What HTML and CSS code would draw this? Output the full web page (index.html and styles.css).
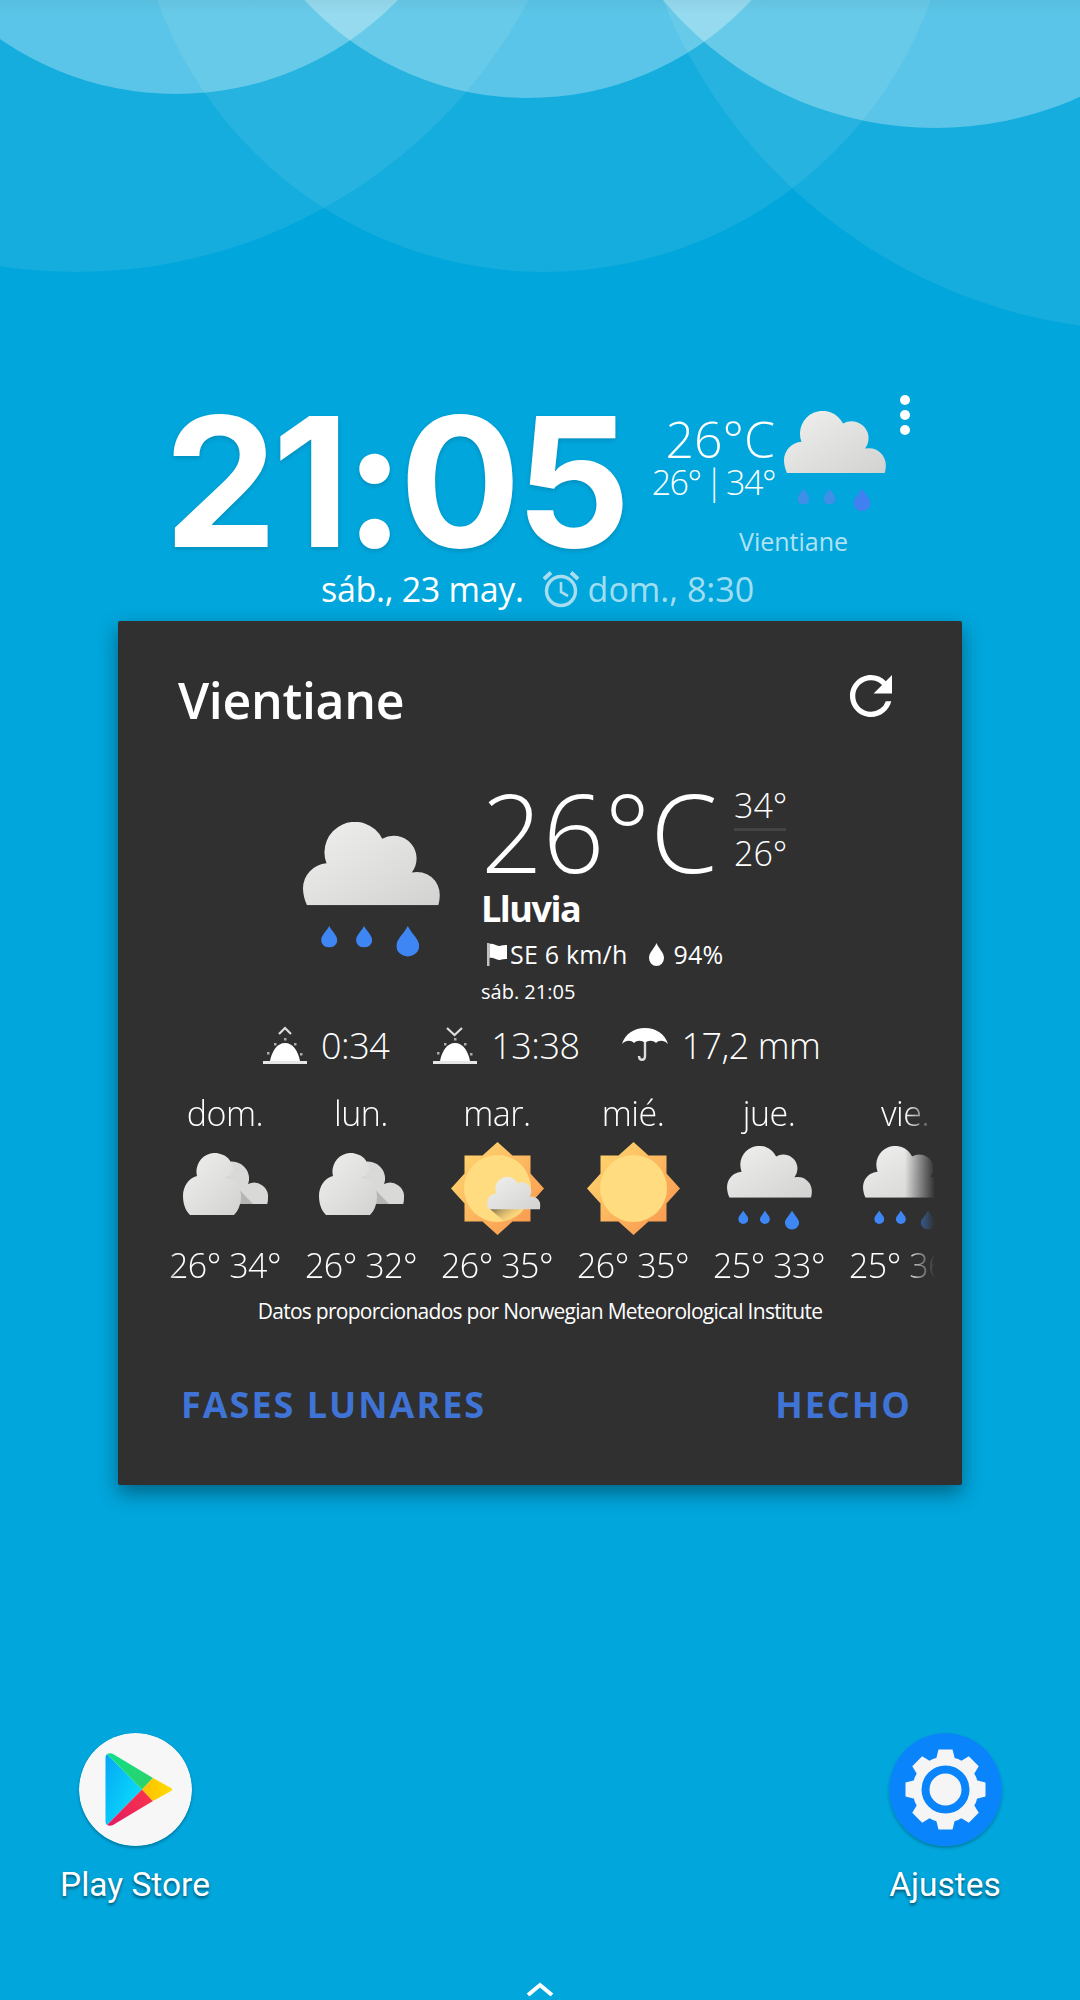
FILE: index.html
```html
<!DOCTYPE html>
<html>
<head>
    <meta charset="UTF-8">
    <meta name="viewport" content="width=device-width, initial-scale=1.0">
    <title>Vientiane</title>
    <link rel="stylesheet" href="styles.css">
</head>
<body>
    <svg class="defs" width="0" height="0">
        <defs>
            <linearGradient id="cloudFill" x1="0" y1="0" x2="1" y2="1">
                <stop offset="0" stop-color="#f0f0ef"/>
                <stop offset="1" stop-color="#d2d2d1"/>
            </linearGradient>
            <linearGradient id="sunFill" x1="0" y1="0" x2="1" y2="1">
                <stop offset="0" stop-color="#ffdd72"/>
                <stop offset="1" stop-color="#f9914c"/>
            </linearGradient>
            <linearGradient id="sunShadow" x1="0" y1="0" x2="1" y2="0.6">
                <stop offset="0" stop-color="#70654a"/>
                <stop offset="1" stop-color="#ffcf70" stop-opacity="0"/>
            </linearGradient>
            <linearGradient id="playBlue" x1="0" y1="0" x2="1" y2="0.8">
                <stop offset="0" stop-color="#05a6f6"/>
                <stop offset="1" stop-color="#0be3fb"/>
            </linearGradient>
            <linearGradient id="playGreen" x1="0" y1="0" x2="1" y2="0.6">
                <stop offset="0" stop-color="#0ddf8a"/>
                <stop offset="1" stop-color="#2bd36c"/>
            </linearGradient>
            <linearGradient id="playRed" x1="1" y1="0" x2="0" y2="1">
                <stop offset="0" stop-color="#fb3648"/>
                <stop offset="1" stop-color="#e21a66"/>
            </linearGradient>
            <linearGradient id="playYellow" x1="0" y1="0" x2="1" y2="0">
                <stop offset="0" stop-color="#ffbe00"/>
                <stop offset="1" stop-color="#ffdc00"/>
            </linearGradient>
            <symbol id="cloud" viewBox="0 0 102 62">
                <path fill="url(#cloudFill)" d="M3 62C1 58 0 53 0 49.3A18.7 18.7 0 0 1 17.500 30.800A22.700 22.700 0 0 1 59 12.500A17 17 0 0 1 81 37.600A17 17 0 0 1 101.800 54.700C101.800 57 101.400 60 100.700 62Z"/>
            </symbol>
            <symbol id="drop" viewBox="0 0 12 16">
                <path d="M6 0C8 4 12 7 12 10.500A6 5.500 0 0 1 0 10.500C0 7 4 4 6 0Z"/>
            </symbol>
            <symbol id="rain" viewBox="0 0 102 102">
                <use href="#cloud" width="102" height="62"/>
                <use href="#drop" class="drop-small" x="13.500" y="77.500" width="12" height="16"/>
                <use href="#drop" class="drop-small" x="39.500" y="77.500" width="12" height="16"/>
                <use href="#drop" class="drop-big" x="69.500" y="76" width="17" height="25.500"/>
            </symbol>
            <symbol id="cloudy" viewBox="0 0 85 62">
                <path fill="#d9d9d8" d="M33 51V20A17 17 0 0 1 66 27A14 14 0 0 1 65 31A14 14 0 0 1 85 45C85 47 84.800 49 84.300 51Z"/>
                <path fill="#b5b5b4" d="M42 22L70 51H50L42 30Z"/>
                <path fill="url(#cloudFill)" d="M7 62C2 57 0 50 0 43C0 33 6 25 14 23A18.500 18.500 0 0 1 50 14C50.500 19 47 23 43 24C52 28 58 35 58 43C58 50 56 57 51 62Z"/>
            </symbol>
            <symbol id="sun" viewBox="0 0 93 93">
                <path fill="url(#sunFill)" d="M46.500 0L61.500 13.500H79.500V31.500L93 46.500L79.500 61.500V79.500H61.500L46.500 93L31.500 79.500H13.500V61.500L0 46.500L13.500 31.500V13.500H31.500Z"/>
                <circle cx="46.500" cy="46.500" r="33.500" fill="#ffdc80"/>
            </symbol>
        </defs>
    </svg>

    <div class="screen">
        <svg class="wallpaper" width="1080" height="340" viewBox="0 0 1080 340">
            <circle cx="76" cy="-241" r="513"/>
            <circle cx="544" cy="-139" r="411"/>
            <circle cx="1154" cy="-199" r="530"/>
            <circle class="light" cx="176" cy="-215" r="309"/>
            <circle class="light" cx="528" cy="-206" r="304"/>
            <circle class="light" cx="935" cy="-225" r="353"/>
        </svg>

        <div class="home-widget">
            <div class="clock-row">
                <div class="time">21:05</div>
                <div class="mini-weather">
                    <div class="mini-top">
                        <div class="mini-temps">
                            <div class="mini-now">26°C</div>
                            <div class="mini-range">26° | 34°</div>
                        </div>
                        <svg class="mini-icon"><use href="#rain"/></svg>
                    </div>
                    <div class="mini-city">Vientiane</div>
                </div>
                <div class="more-dots"><i></i><i></i><i></i></div>
            </div>
            <div class="date-row">
                <span class="date">sáb., 23 may.</span>
                <svg class="alarm" viewBox="0 0 38 38" fill="none" stroke="#a8dcef" stroke-width="3.400">
                    <circle cx="19" cy="21" r="14.500"/>
                    <path d="M19 12V22L26 26" stroke-width="2.600"/>
                    <path d="M2 9L9 2.500M36 9L29 2.500" stroke-width="4"/>
                </svg>
                <span class="next-alarm">dom., 8:30</span>
            </div>
        </div>

        <div class="card">
            <div class="card-head">
                <div class="city">Vientiane</div>
                <svg class="refresh" viewBox="4 4 16 16" fill="#fff">
                    <path d="M17.650 6.350A7.958 7.958 0 0 0 12 4c-4.420 0-7.990 3.580-7.990 8s3.570 8 7.990 8c3.730 0 6.840-2.550 7.730-6h-2.080A5.990 5.990 0 0 1 12 18c-3.310 0-6-2.690-6-6s2.690-6 6-6c1.660 0 3.140.690 4.220 1.780L13 11h7V4l-2.350 2.350z"/>
                </svg>
            </div>

            <div class="now">
                <svg class="now-icon"><use href="#rain"/></svg>
                <div class="now-info">
                    <div class="now-temps">
                        <div class="now-temp">26°C</div>
                        <div class="now-range">
                            <div>34°</div>
                            <div class="now-range-low">26°</div>
                        </div>
                    </div>
                    <div class="now-cond">Lluvia</div>
                    <div class="now-meta">
                        <svg class="flag" viewBox="0 0 20 23" fill="#fff"><path d="M0 0H2.500V23H0Z" opacity=".7"/><path d="M2.500 1C6 0 9 3 12 3C14 3 15 2 20 2V16C15 16 14 17 12 17C9 17 6 14 2.500 15Z"/></svg>
                        <span>SE 6 km/h</span>
                        <svg class="hum" viewBox="0 0 17 23" fill="#fff"><path d="M8.500 0C10 5 16 9 16 15A7.500 8 0 0 1 1 15C1 9 7 5 8.500 0Z"/></svg>
                        <span>94%</span>
                    </div>
                    <div class="now-time">sáb. 21:05</div>
                </div>
            </div>

            <div class="sun-row">
                <svg class="sun-icon" viewBox="0 0 44 38">
                    <path d="M16 8L22 2L28 8" fill="none" stroke="#ddd" stroke-width="2.200"/>
                    <path d="M7 35C9 25 14 17 22 17S35 25 37 35Z" fill="#fff"/>
                    <path d="M0 35H44V38H0Z" fill="#e6e6e6"/>
                    <path d="M21 12h2.500v2.500h-2.500ZM11 17h2.500v2.500h-2.500ZM31 17h2.500v2.500h-2.500ZM4 26h2.500v2.500H4ZM37 27h2.500v2.500h-2.500Z" fill="#aaa"/>
                </svg>
                <span class="sun-time">0:34</span>
                <svg class="sun-icon set" viewBox="0 0 44 38">
                    <path d="M14 2L21.500 9L29 2" fill="none" stroke="#ddd" stroke-width="2.200"/>
                    <path d="M7 35C9 25 14 17 22 17S35 25 37 35Z" fill="#fff"/>
                    <path d="M0 35H44V38H0Z" fill="#e6e6e6"/>
                    <path d="M21 12h2.500v2.500h-2.500ZM11 17h2.500v2.500h-2.500ZM31 17h2.500v2.500h-2.500ZM4 26h2.500v2.500H4ZM37 27h2.500v2.500h-2.500Z" fill="#aaa"/>
                </svg>
                <span class="sun-time">13:38</span>
                <svg class="umbrella" viewBox="0 0 46 34">
                    <path d="M0 16C3 6 12 0 23 0S43 6 46 16C42 12 37 12 34 15C31 12 26 12 23 15C20 12 15 12 12 15C9 12 4 12 0 16Z" fill="#fff"/>
                    <path d="M23 14V28C23 33 17 33 17 28" fill="none" stroke="#ddd" stroke-width="2.400"/>
                </svg>
                <span class="sun-time">17,2 mm</span>
            </div>

            <div class="forecast">
                <div class="day">
                    <div class="day-name">dom.</div>
                    <div class="day-icon"><svg class="ic-cloudy"><use href="#cloudy"/></svg></div>
                    <div class="day-temp">26° 34°</div>
                </div>
                <div class="day">
                    <div class="day-name">lun.</div>
                    <div class="day-icon"><svg class="ic-cloudy"><use href="#cloudy"/></svg></div>
                    <div class="day-temp">26° 32°</div>
                </div>
                <div class="day">
                    <div class="day-name">mar.</div>
                    <div class="day-icon">
                        <svg class="ic-sun" viewBox="0 0 93 93">
                            <use href="#sun" width="93" height="93"/>
                            <path d="M39 67H70L64 80H54Z" fill="url(#sunShadow)"/>
                            <use href="#cloud" x="36" y="35" width="53.500" height="32.500"/>
                        </svg>
                    </div>
                    <div class="day-temp">26° 35°</div>
                </div>
                <div class="day">
                    <div class="day-name">mié.</div>
                    <div class="day-icon"><svg class="ic-sun"><use href="#sun"/></svg></div>
                    <div class="day-temp">26° 35°</div>
                </div>
                <div class="day">
                    <div class="day-name">jue.</div>
                    <div class="day-icon"><svg class="ic-rain"><use href="#rain"/></svg></div>
                    <div class="day-temp">25° 33°</div>
                </div>
                <div class="day">
                    <div class="day-name">vie.</div>
                    <div class="day-icon"><svg class="ic-rain"><use href="#rain"/></svg></div>
                    <div class="day-temp">25° 36°</div>
                </div>
            </div>

            <div class="credit">Datos proporcionados por Norwegian Meteorological Institute</div>

            <div class="card-actions">
                <span>FASES LUNARES</span>
                <span>HECHO</span>
            </div>
        </div>

        <div class="dock">
            <div class="app">
                <svg class="app-icon" viewBox="0 0 113 113">
                    <circle cx="56.500" cy="56.500" r="56.500" fill="#f7f7f7"/>
                    <path d="M28 21C27 22 26.500 23 26.500 25V88C26.500 90 27 91 28 92L63 56.500Z" fill="url(#playBlue)"/>
                    <path d="M28 21C30 20 32 20 34 21L74 45L63 56.500Z" fill="url(#playGreen)"/>
                    <path d="M28 92C30 93 32 93 34 92L74 68L63 56.500Z" fill="url(#playRed)"/>
                    <path d="M74 45L92 55C93.500 56 93.500 57 92 58L74 68L63 56.500Z" fill="url(#playYellow)"/>
                </svg>
                <div class="app-name">Play Store</div>
            </div>
            <div class="app">
                <svg class="app-icon" viewBox="-56.500 -56.500 113 113">
                    <circle r="56.500" fill="#0a84fa"/>
                    <g fill="#f5f5f5">
                        <circle r="33"/>
                        <path id="tooth" d="M-10 -28L-7 -40H7L10 -28Z"/>
                        <use href="#tooth" transform="rotate(45)"/>
                        <use href="#tooth" transform="rotate(90)"/>
                        <use href="#tooth" transform="rotate(135)"/>
                        <use href="#tooth" transform="rotate(180)"/>
                        <use href="#tooth" transform="rotate(225)"/>
                        <use href="#tooth" transform="rotate(270)"/>
                        <use href="#tooth" transform="rotate(315)"/>
                    </g>
                    <circle r="20" fill="none" stroke="#0a84fa" stroke-width="8"/>
                </svg>
                <div class="app-name">Ajustes</div>
            </div>
        </div>

        <svg class="drawer-arrow" viewBox="0 0 28 14" fill="none" stroke="#fff" stroke-width="4"><path d="M2 13L14 3L26 13"/></svg>
    </div>
</body>
</html>
```

FILE: styles.css
```css
/* pantalla */
body {
    margin: 0;
    padding: 0;
    font-family: "Open Sans", "Noto Sans", sans-serif;
    color: #fff;
    background-color: #00a6dc;
}

.defs {
    position: absolute;
}

.screen {
    position: relative;
    width: 1080px;
    height: 2000px;
    overflow: hidden;
    display: flex;
    flex-direction: column;
    background-color: #00a6dc;
}

.wallpaper {
    position: absolute;
    top: 0;
    left: 0;
}

.wallpaper circle {
    fill: rgba(255, 255, 255, 0.08);
}

.wallpaper circle.light {
    fill: rgba(255, 255, 255, 0.3);
}

.screen::before {
    content: "";
    position: absolute;
    top: 0;
    left: 0;
    width: 100%;
    height: 14px;
    z-index: 1;
    background: linear-gradient(rgba(0, 0, 0, 0.04), rgba(0, 0, 0, 0));
}

.drop-small {
    fill: var(--drop-small, #3f86f5);
}

.drop-big {
    fill: var(--drop-big, #3f86f5);
}

/* widget del reloj */
.home-widget {
    position: relative;
    height: 226px;
    margin-top: 395px;
}

.clock-row {
    display: flex;
    padding-left: 164px;
    height: 170px;
}

.time {
    width: 484px;
    font-family: "Inter", sans-serif;
    font-weight: 700;
    font-size: 180px;
    line-height: 174px;
    letter-spacing: -5.2px;
    text-shadow: 0 2px 4px rgba(0, 0, 0, 0.15);
}

.mini-weather {
    width: 240px;
}

.mini-top {
    display: flex;
    height: 119px;
}

.mini-temps {
    width: 127px;
    text-align: right;
    padding-top: 18px;
    white-space: nowrap;
}

.mini-now {
    font-size: 50px;
    font-weight: 300;
    line-height: 52px;
}

.mini-range {
    font-size: 34px;
    font-weight: 300;
    line-height: 34px;
    letter-spacing: -1.5px;
    word-spacing: -3px;
}

.mini-icon {
    --drop-small: #3f8fe8;
    --drop-big: #4080f0;
    width: 102px;
    height: 102px;
    margin-left: 9px;
    margin-top: 16px;
}

.mini-city {
    padding-left: 91px;
    padding-top: 10px;
    font-size: 25px;
    color: rgba(255, 255, 255, 0.7);
}

.more-dots {
    position: absolute;
    left: 900px;
    top: 0;
    display: flex;
    flex-direction: column;
    gap: 5px;
}

.more-dots i {
    display: block;
    width: 10px;
    height: 10px;
    border-radius: 50%;
    background-color: #fff;
}

.date-row {
    display: flex;
    align-items: center;
    padding-left: 321px;
    height: 48px;
    font-size: 34px;
    letter-spacing: -0.3px;
}

.alarm {
    width: 38px;
    height: 38px;
    margin-left: 18px;
    margin-right: 8px;
}

.next-alarm {
    letter-spacing: 0;
    color: rgba(255, 255, 255, 0.65);
}

/* tarjeta */
.card {
    margin: 0 118px;
    height: 864px;
    background-color: #303030;
    border-radius: 2px;
    box-shadow: 0 8px 20px rgba(0, 0, 0, 0.4);
}

.card-head {
    display: flex;
    justify-content: space-between;
    align-items: center;
    padding: 44px 70px 0 60px;
    height: 70px;
}

.city {
    font-size: 50px;
    font-weight: 600;
    letter-spacing: -0.3px;
}

.refresh {
    width: 42px;
    height: 42px;
    margin-top: -8px;
}

.now {
    display: flex;
    padding-top: 44px;
    height: 210px;
}

.now-icon {
    width: 137px;
    height: 137px;
    margin-left: 185px;
    margin-top: 43px;
}

.now-info {
    margin-left: 41px;
}

.now-temps {
    display: flex;
}

.now-temp {
    font-size: 108px;
    font-weight: 300;
    line-height: 106px;
    width: 253px;
    height: 108px;
}

.now-range {
    width: 52px;
    padding-top: 7px;
    font-size: 34px;
    font-weight: 300;
    line-height: 38px;
}

.now-range-low {
    border-top: 3px solid #444;
    margin-top: 4px;
    padding-top: 3px;
}

.now-cond {
    margin-top: -1px;
    font-size: 36px;
    font-weight: 700;
    line-height: 46px;
    letter-spacing: -1.5px;
}

.now-meta {
    display: flex;
    align-items: center;
    font-size: 25px;
    height: 44px;
    letter-spacing: 0.2px;
}

.flag {
    width: 20px;
    height: 23px;
    margin-left: 6px;
    margin-right: 3px;
}

.hum {
    width: 17px;
    height: 23px;
    margin-left: 21px;
    margin-right: 8px;
}

.now-time {
    font-size: 20px;
    line-height: 32px;
}

.sun-row {
    display: flex;
    align-items: center;
    padding-left: 145px;
    height: 50px;
    margin-top: 31px;
    font-size: 36px;
    font-weight: 300;
    letter-spacing: -0.5px;
}

.sun-icon {
    width: 44px;
    height: 38px;
}

.sun-time {
    margin-left: 14px;
}

.sun-icon.set {
    margin-left: 44px;
}

.umbrella {
    width: 46px;
    height: 34px;
    margin-left: 42px;
}

.forecast {
    display: flex;
    width: 778px;
    margin-left: 39px;
    margin-top: 21px;
    overflow: hidden;
    -webkit-mask-image: linear-gradient(to right, transparent 0, #000 20px, #000 748px, transparent 778px);
    mask-image: linear-gradient(to right, transparent 0, #000 20px, #000 748px, transparent 778px);
}

.day {
    flex: 0 0 136px;
    text-align: center;
    font-size: 34px;
    font-weight: 300;
    letter-spacing: -0.5px;
}

.day-name {
    line-height: 44px;
}

.day-icon {
    height: 105px;
    display: flex;
    align-items: center;
    justify-content: center;
    margin-top: 1px;
}

.ic-cloudy {
    width: 85px;
    height: 62px;
    margin-top: -10px;
}

.ic-sun {
    width: 93px;
    height: 93px;
}

.ic-rain {
    width: 85px;
    height: 85px;
}

.day-temp {
    margin-top: 2px;
    line-height: 44px;
}

.credit {
    text-align: center;
    font-size: 21px;
    line-height: 30px;
    margin-top: 9px;
    letter-spacing: -0.73px;
}

.card-actions {
    display: flex;
    justify-content: space-between;
    padding: 54px 50px 0 63px;
    font-size: 36px;
    font-weight: 700;
    letter-spacing: 2px;
    color: #3f74d6;
}

/* iconos de abajo */
.dock {
    display: flex;
    justify-content: space-between;
    padding: 0 15px 0 15px;
    margin-top: 248px;
}

.app {
    width: 240px;
    display: flex;
    flex-direction: column;
    align-items: center;
}

.app-icon {
    width: 113px;
    height: 113px;
    border-radius: 50%;
    box-shadow: 0 2px 3px rgba(0, 0, 0, 0.25);
}

.app-name {
    margin-top: 19px;
    font-family: "Roboto", sans-serif;
    font-size: 33.5px;
    text-shadow: 0 2px 3px rgba(0, 0, 0, 0.5);
}

.drawer-arrow {
    position: absolute;
    left: 526px;
    top: 1982px;
    width: 28px;
    height: 14px;
}
```
